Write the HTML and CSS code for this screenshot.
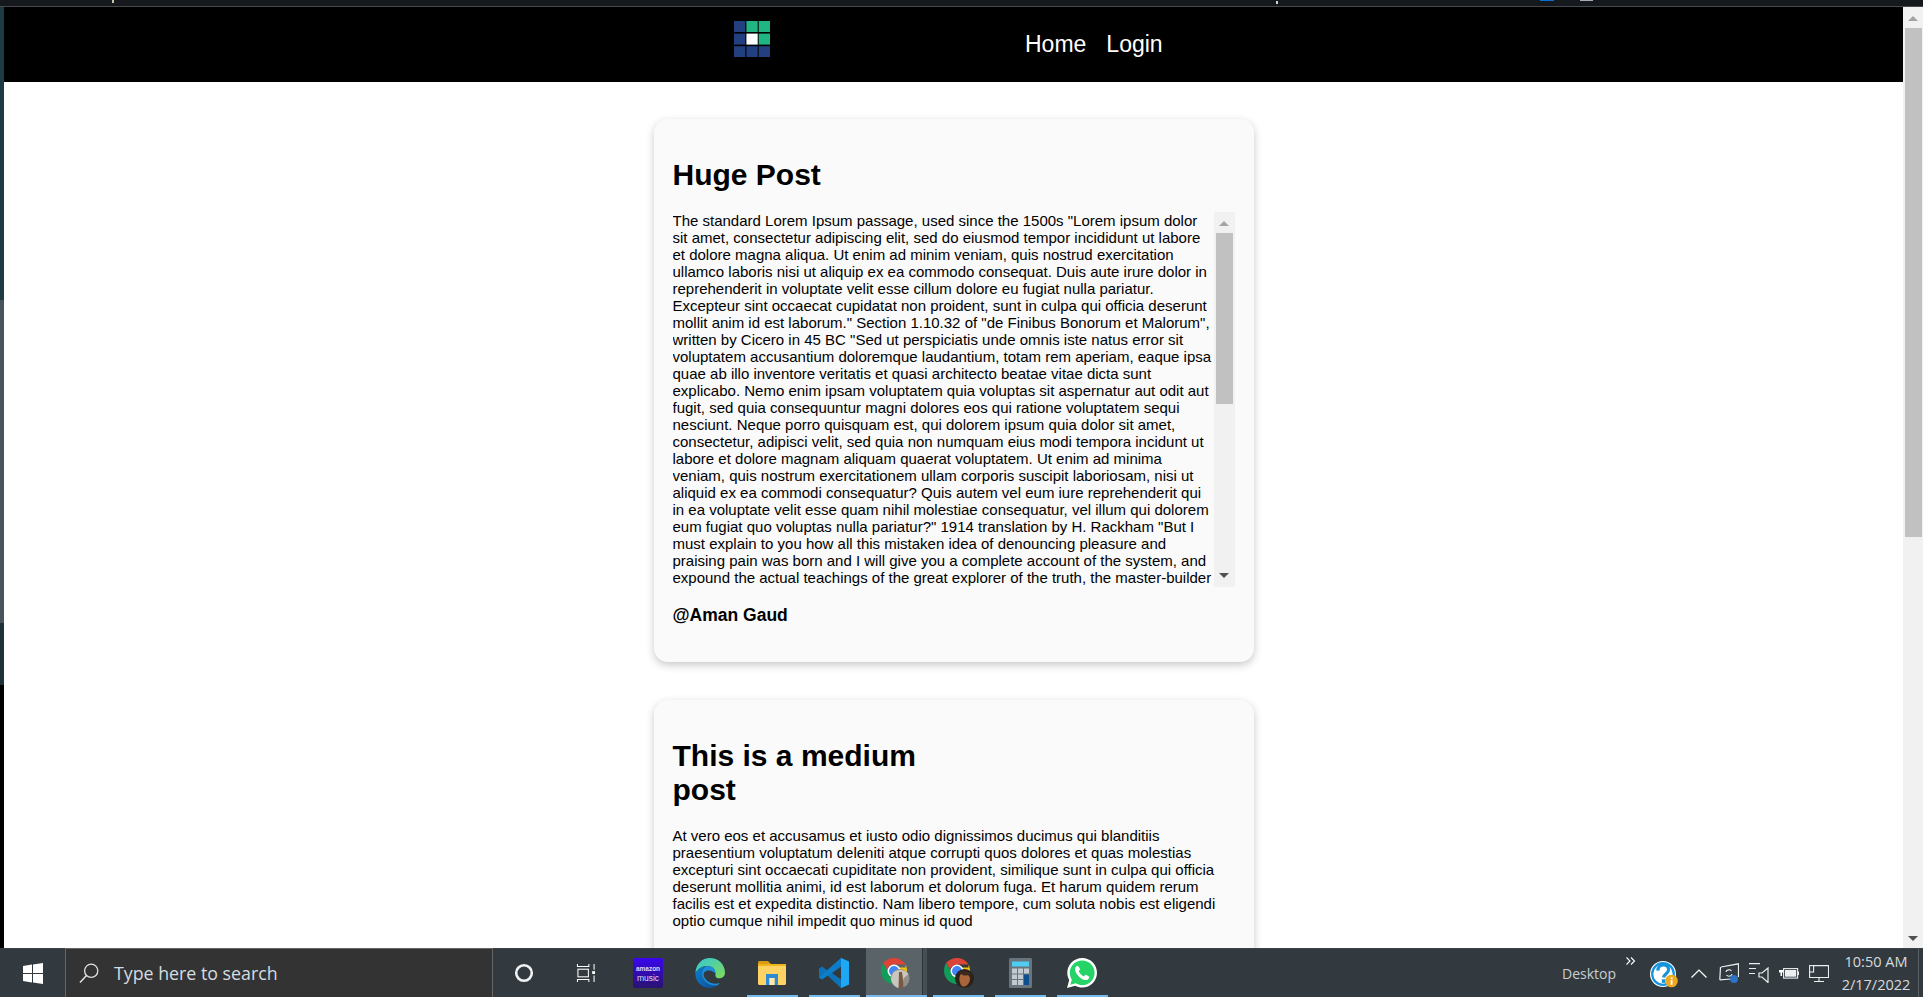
FILE: index.html
```html
<!DOCTYPE html>
<html lang="en">
<head>
<meta charset="utf-8">
<title>Posts</title>
<link rel="stylesheet" href="styles.css">
</head>
<body>
<div class="screen">
  <div class="topstrip">
    <span class="mark mark-a"></span>
    <span class="mark mark-b"></span>
    <span class="mark mark-c"></span>
    <span class="mark mark-d"></span>
  </div>
  <div class="window">
    <div class="desk-edge">
      <div class="edge-a"></div>
      <div class="edge-b"></div>
      <div class="edge-c"></div>
      <div class="edge-d"></div>
    </div>
    <div class="page">
      <nav class="navbar">
        <svg class="logo" viewBox="0 0 36 36">
          <rect x="0" y="0" width="11.3" height="11" fill="#22407f"/>
          <rect x="12.4" y="0" width="11.3" height="11" fill="#20b582"/>
          <rect x="24.7" y="0" width="11.3" height="11" fill="#20b582"/>
          <rect x="0" y="12.6" width="11.3" height="11" fill="#22407f"/>
          <rect x="12.4" y="12.6" width="11.3" height="11" fill="#fff"/>
          <rect x="24.7" y="12.6" width="11.3" height="11" fill="#20b582"/>
          <rect x="0" y="25.2" width="11.3" height="11" fill="#22407f"/>
          <rect x="12.4" y="25.2" width="11.3" height="11" fill="#22407f"/>
          <rect x="24.7" y="25.2" width="11.3" height="11" fill="#22407f"/>
        </svg>
        <div class="nav-links">
          <a class="nav-link">Home</a>
          <a class="nav-link">Login</a>
        </div>
      </nav>
      <main class="feed">
        <article class="card">
          <h2 class="card-title">Huge Post</h2>
          <div class="scroller">
            <p class="scroller-text">The standard Lorem Ipsum passage, used since the 1500s "Lorem ipsum dolor sit amet, consectetur adipiscing elit, sed do eiusmod tempor incididunt ut labore et dolore magna aliqua. Ut enim ad minim veniam, quis nostrud exercitation ullamco laboris nisi ut aliquip ex ea commodo consequat. Duis aute irure dolor in reprehenderit in voluptate velit esse cillum dolore eu fugiat nulla pariatur. Excepteur sint occaecat cupidatat non proident, sunt in culpa qui officia deserunt mollit anim id est laborum." Section 1.10.32 of "de Finibus Bonorum et Malorum", written by Cicero in 45 BC "Sed ut perspiciatis unde omnis iste natus error sit voluptatem accusantium doloremque laudantium, totam rem aperiam, eaque ipsa quae ab illo inventore veritatis et quasi architecto beatae vitae dicta sunt explicabo. Nemo enim ipsam voluptatem quia voluptas sit aspernatur aut odit aut fugit, sed quia consequuntur magni dolores eos qui ratione voluptatem sequi nesciunt. Neque porro quisquam est, qui dolorem ipsum quia dolor sit amet, consectetur, adipisci velit, sed quia non numquam eius modi tempora incidunt ut labore et dolore magnam aliquam quaerat voluptatem. Ut enim ad minima veniam, quis nostrum exercitationem ullam corporis suscipit laboriosam, nisi ut aliquid ex ea commodi consequatur? Quis autem vel eum iure reprehenderit qui in ea voluptate velit esse quam nihil molestiae consequatur, vel illum qui dolorem eum fugiat quo voluptas nulla pariatur?" 1914 translation by H. Rackham "But I must explain to you how all this mistaken idea of denouncing pleasure and praising pain was born and I will give you a complete account of the system, and expound the actual teachings of the great explorer of the truth, the master-builder</p>
            <div class="mini-bar">
              <div class="arrow-up small"></div>
              <div class="mini-track"><div class="mini-thumb"></div></div>
              <div class="arrow-down small"></div>
            </div>
          </div>
          <p class="author">@Aman Gaud</p>
        </article>
        <article class="card">
          <h2 class="card-title narrow">This is a medium post</h2>
          <p class="card-text">At vero eos et accusamus et iusto odio dignissimos ducimus qui blanditiis praesentium voluptatum deleniti atque corrupti quos dolores et quas molestias excepturi sint occaecati cupiditate non provident, similique sunt in culpa qui officia deserunt mollitia animi, id est laborum et dolorum fuga. Et harum quidem rerum facilis est et expedita distinctio. Nam libero tempore, cum soluta nobis est eligendi optio cumque nihil impedit quo minus id quod</p>
        </article>
      </main>
    </div>
    <div class="page-bar">
      <div class="arrow-up"></div>
      <div class="page-track"><div class="page-thumb"></div></div>
      <div class="arrow-down"></div>
    </div>
  </div>
  <footer class="taskbar">
    <div class="start">
      <svg class="win-logo" viewBox="0 0 20 21"><path fill="#fff" d="M0 3 9 1.6V10H0ZM10 1.4 20 0V10H10ZM0 11H9V19.4L0 18ZM10 11H20V21L10 19.6Z"/></svg>
    </div>
    <div class="search">
      <svg class="search-icon" viewBox="0 0 20 20"><circle cx="12.2" cy="7.8" r="6.6" fill="none" stroke="#dfe3e5" stroke-width="1.3"/><path d="M7.5 12.5 1 19.4" stroke="#dfe3e5" stroke-width="1.5" fill="none"/></svg>
      <span class="search-text">Type here to search</span>
    </div>
    <div class="tile">
      <svg class="cortana" viewBox="0 0 20 20"><circle cx="10" cy="10" r="7.8" fill="none" stroke="#f0f2f3" stroke-width="2.6"/></svg>
    </div>
    <div class="tile">
      <svg class="taskview" viewBox="0 0 20 20" fill="none" stroke="#fff" stroke-width="1.1"><path d="M1 0V2.6H13V0M1 19V16.4H13V19"/><rect x="1.5" y="5.5" width="11" height="8"/><path d="M18.5 0V6M18.5 12V19"/><rect x="16.5" y="7.5" width="3" height="3" fill="#fff" stroke="none"/></svg>
    </div>
    <div class="tile">
      <div class="amazon"><span class="amazon-top">amazon</span><span class="amazon-bottom">music</span></div>
    </div>
    <div class="tile">
      <svg class="app-icon" viewBox="0 0 30 30">
        <defs>
          <linearGradient id="edgeA" x1="0" y1="0" x2="1" y2="1"><stop offset="0" stop-color="#33c6d8"/><stop offset="1" stop-color="#7fdc58"/></linearGradient>
          <linearGradient id="edgeB" x1="0" y1="0" x2="1" y2="1"><stop offset="0" stop-color="#0c7fd0"/><stop offset="1" stop-color="#0b4f96"/></linearGradient>
        </defs>
        <path fill="url(#edgeA)" d="M15 0C23 0 30 6 30 14.5 30 20 25 21 22 20 20 19 20.500 17 20.500 15.500 20.500 11 17 8 12 8 7 8 3 11 .4 15 1 6 7 0 15 0Z"/>
        <path fill="url(#edgeB)" d="M.4 15C3 11 7 8 12 8 9 9 7 12 7 16 7 23 14 28 22 27.500 19.500 29.300 17 30 15 30 6 30 0 23 .4 15Z"/>
        <path fill="#1c8ddc" d="M12 8C17 8 20.500 11 20.500 15.500 17 12 12 11.500 9.500 14 8 15.700 8.500 20 12.500 23 16 25.500 20 26.500 25 25 24 26 23 27 22 27.500 14 28 7 23 7 16 7 12 9 9 12 8Z"/>
      </svg>
    </div>
    <div class="tile open">
      <svg class="folder" viewBox="0 0 28 24">
        <path fill="#d99c10" d="M0 1.500C0 .7.700 0 1.500 0H10L13 3H0Z"/>
        <rect y="3" width="28" height="4" fill="#eeb31d"/>
        <path fill="#ffd363" d="M0 5H28V22.500C28 23.300 27.300 24 26.500 24H1.500C.7 24 0 23.300 0 22.500Z"/>
        <path fill="#2d8ad4" d="M8 13H20V24H16.500V17H11.500V24H8Z"/>
        <rect x="11.500" y="17" width="5" height="7" fill="#ffe9ad"/>
      </svg>
    </div>
    <div class="tile open">
      <svg class="app-icon" viewBox="0 0 30 30">
        <path fill="#0e72b8" d="M22 0 30 3.500V26.500L22 30 8.500 17.500 3 21.500 0 19.500V10.500L3 8.500 8.500 12.500ZM22 8.500 13 15 22 21.500Z"/>
        <path fill="#1ea7f2" d="M22 0 30 3.500V26.500L22 30Z"/>
        <path fill="#0c7ec8" d="M0 19.500 22 0V8.500L3 21.500Z"/>
      </svg>
    </div>
    <div class="tile active">
      <svg class="app-icon" viewBox="0 0 30 30">
        <path fill="#db4437" d="M13 0C18 0 22 2.500 24.500 6.500H13C9.500 6.500 6.800 8.500 6 11.500L2 5C4.500 2 8.500 0 13 0Z"/>
        <path fill="#f4c20d" d="M24.500 6.500C25.500 8.500 26 10.700 26 13 26 20 20 26 13 26L18.500 16.500C19 15 19.300 12 17 9.500H24.500Z"/>
        <path fill="#0f9d58" d="M2 5 8 15.500C9.500 18.200 12.500 19.500 15 19L13 26C6 26 0 20 0 13 0 10 .7 7.200 2 5Z"/>
        <circle cx="13" cy="13" r="6.500" fill="#fff"/><circle cx="13" cy="13" r="5" fill="#4285f4"/>
        <circle cx="19" cy="20.500" r="9.500" fill="#8f8e8a"/>
        <path fill="#c9c6be" d="M12 15C15 11 24 11 27.500 16L23 20 20 30H17C13 28 10 24 10 20Z"/>
        <path fill="#7b5a44" d="M18 14 21 14 22 21 22.500 30H17.500Z"/>
      </svg>
    </div>
    <div class="tile open">
      <svg class="app-icon shifted" viewBox="0 0 30 30">
        <path fill="#db4437" d="M13 0C18 0 22 2.500 24.500 6.500H13C9.500 6.500 6.800 8.500 6 11.500L2 5C4.500 2 8.500 0 13 0Z"/>
        <path fill="#f4c20d" d="M24.500 6.500C25.500 8.500 26 10.700 26 13 26 20 20 26 13 26L18.500 16.500C19 15 19.300 12 17 9.500H24.500Z"/>
        <path fill="#0f9d58" d="M2 5 8 15.500C9.500 18.200 12.500 19.500 15 19L13 26C6 26 0 20 0 13 0 10 .7 7.200 2 5Z"/>
        <circle cx="13" cy="13" r="6.500" fill="#fff"/><circle cx="13" cy="13" r="5" fill="#4285f4"/>
        <circle cx="20.500" cy="20.500" r="9.500" fill="#2d211b"/>
        <path fill="#a8653a" d="M17 16C21 14 26 17 26 21 25.500 26 22 29 18.500 28.500 15.500 26.500 14 19 17 16Z"/>
        <path fill="#3a2a20" d="M15 15C19 12 25 13 28 17L20 17.500Z"/>
      </svg>
    </div>
    <div class="tile open">
      <svg class="calc" viewBox="0 0 23 30">
        <rect width="23" height="30" rx="1.500" fill="#68757f"/>
        <rect x="3" y="3.500" width="17" height="5" fill="#4fcdf0"/>
        <g fill="#c3cbd0">
          <rect x="3" y="10.500" width="5" height="5"/><rect x="9" y="10.500" width="5" height="5"/><rect x="15" y="10.500" width="5" height="5"/>
          <rect x="3" y="16.500" width="5" height="4.500"/><rect x="9" y="16.500" width="5" height="4.500"/>
          <rect x="3" y="22" width="5" height="5"/><rect x="9" y="22" width="5" height="5"/>
        </g>
        <rect x="15" y="16.500" width="5" height="10.500" fill="#104f8f"/>
      </svg>
    </div>
    <div class="tile open">
      <svg class="app-icon" viewBox="0 0 30 30">
        <path fill="#fff" d="M15.200 0C23.500 0 30 6.500 30 14.700 30 23 23.500 29.500 15.200 29.500 12.700 29.500 10.300 28.900 8.200 27.700L0 30 2.200 22C.9 19.800.3 17.300.3 14.700.3 6.500 7 0 15.200 0Z"/>
        <path fill="#25d366" d="M15.200 2.400C22.100 2.400 27.600 7.900 27.600 14.700 27.600 21.600 22.100 27.100 15.200 27.100 12.900 27.100 10.700 26.400 8.800 25.300L3.400 26.800 4.800 21.500C3.500 19.600 2.800 17.200 2.800 14.700 2.800 7.900 8.400 2.400 15.200 2.400Z"/>
        <path fill="#fff" d="M11 8C10.500 7.800 10 7.800 9.500 8.200 8.500 9 7.800 10.200 8 11.800 8.500 15 11 18.500 14.500 20.800 17 22.400 19.700 22.500 21.200 21.200 22 20.500 22.400 19.500 22.300 18.800 21 17.800 19.800 17.100 18.500 16.600L16.900 18.500C14.500 17.500 12.700 15.500 11.700 13.300L13.200 11.600C12.800 10.300 12 9 11 8Z"/>
      </svg>
    </div>
    <div class="tray">
      <span class="tray-label">Desktop</span>
      <svg class="tray-more" viewBox="0 0 10 8" fill="none" stroke="#fff" stroke-width="1.100"><path d="M.5.500 4 4 .5 7.500M5 .500 8.500 4 5 7.500"/></svg>
      <svg class="tray-help" viewBox="0 0 28 27">
        <circle cx="13" cy="13" r="13" fill="#fff"/>
        <circle cx="13" cy="13" r="10.800" fill="#fff" stroke="#1593dc" stroke-width="2.200"/>
        <path d="M7.800 9.600C8 5.800 10.500 4 13.300 4 16.300 4 18.600 5.800 18.600 8.800 18.600 12.500 14 12.800 13.600 16.500" fill="none" stroke="#1593dc" stroke-width="3.200"/>
        <rect x="11.800" y="18.300" width="3.600" height="3.600" fill="#1593dc"/>
        <circle cx="21.500" cy="20" r="6.300" fill="#f0a81f"/>
        <rect x="20.700" y="19" width="1.800" height="4.800" fill="#fff"/><rect x="20.700" y="16.300" width="1.800" height="1.800" fill="#fff"/>
      </svg>
      <svg class="tray-caret" viewBox="0 0 16 9"><path d="M.5 8.500 8 1 15.500 8.500" fill="none" stroke="#fff" stroke-width="1.200"/></svg>
      <svg class="tray-sync" viewBox="0 0 20 20" fill="none" stroke="#eceff0" stroke-width="1.200">
        <path d="M2 4 19.500.8V14M.8 16.800 1.500 4M.8 16.800 12 16"/>
        <path d="M7 9C7.500 6.500 11 6 12.500 8M13 11C12.500 13.500 9 14 7.500 12"/>
        <circle cx="15" cy="16" r="4" fill="#2c73c6" stroke="none"/>
      </svg>
      <svg class="tray-speaker" viewBox="0 0 20 20" fill="none" stroke="#eceff0" stroke-width="1.200">
        <path d="M0 .600H11M0 5.500H7M0 10.500H6"/>
        <path d="M19 5V19.500L13 14H10V10H13Z"/>
      </svg>
      <svg class="tray-battery" viewBox="0 0 20 12">
        <path d="M1 0V3M3.500 0V3M0 3H4.500V5.500H3V9H1.500V5.500H0Z" fill="#fff"/>
        <rect x="4.600" y="1.600" width="14" height="9.500" fill="none" stroke="#eceff0" stroke-width="1.100"/>
        <rect x="6" y="3" width="11.200" height="6.700" fill="#eceff0"/>
        <rect x="19" y="4.500" width="1" height="3.500" fill="#eceff0"/>
      </svg>
      <svg class="tray-net" viewBox="0 0 20 17" fill="none" stroke="#eceff0" stroke-width="1.100">
        <path d="M5 .600H19.500V12.500H.6V7M10 12.500V16M5 16.500H15"/>
        <rect x=".6" y=".6" width="4" height="6.400"/>
      </svg>
      <div class="clock">
        <span class="clock-line">10:50 AM</span>
        <span class="clock-line">2/17/2022</span>
      </div>
      <div class="show-desktop"></div>
    </div>
  </footer>
</div>
</body>
</html>
```

FILE: styles.css
```css
* { box-sizing: border-box; }
html, body { margin: 0; height: 100%; overflow: hidden; }
body { font-family: "Liberation Sans", Arial, sans-serif; color: #000; background: #000; }

.screen { display: flex; flex-direction: column; height: 997px; width: 1923px; }
.topstrip { height: 7px; flex: none; background: #15181c; border-bottom: 1px solid #46484a; position: relative; }
.mark { position: absolute; top: 0; }
.mark-a { left: 112px; width: 2px; height: 3px; background: #c9c4a0; }
.mark-b { left: 1540px; width: 14px; height: 1px; background: #0a6fd0; }
.mark-c { left: 1580px; width: 13px; height: 1px; background: #a9a9bb; }
.mark-d { left: 1276px; top: 1px; width: 2px; height: 3px; background: #cfd2d4; }

.window { flex: 1; min-height: 0; display: flex; }
.desk-edge { width: 4px; flex: none; display: flex; flex-direction: column; }
.edge-a { height: 293px; background: #1f3a42; flex: none; }
.edge-b { height: 323px; background: #47545a; flex: none; }
.edge-c { height: 62px; background: #1e3038; flex: none; }
.edge-d { flex: 1; background: #000; }

.page { flex: 1; min-width: 0; background: #fff; overflow: hidden; }
.navbar { height: 75px; background: #000; display: flex; padding-left: 730px; }
.logo { width: 36px; height: 36px; margin-top: 14px; flex: none; }
.nav-links { display: flex; gap: 20px; margin-left: 255px; align-items: center; padding-bottom: 1px; }
.nav-link { color: #fff; font-size: 23px; }

.feed { display: flex; flex-direction: column; align-items: center; gap: 38px; padding-top: 37px; }
.card { width: 600px; flex: none; padding: 19px 19px 37px; background: #fafafa; border-radius: 14px; box-shadow: 0 3px 8px rgba(0,0,0,.22); }
.card-title { margin: 20px 0; font-size: 30px; font-weight: 700; line-height: 34px; }
.card-title.narrow { max-width: 280px; }
.scroller { display: flex; height: 375px; overflow: hidden; }
.scroller-text { flex: 1; margin: 0; font-size: 15px; line-height: 17px; min-width: 0; }
.card-text { margin: 0; font-size: 15px; line-height: 17px; padding-bottom: 60px; }
.author { margin: 18px 0 0; font-size: 17.5px; font-weight: 700; line-height: 20px; }

.mini-bar { width: 21px; flex: none; background: #f1f1f1; display: flex; flex-direction: column; align-items: center; }
.mini-track { flex: 1; width: 100%; padding: 0 2px; }
.mini-thumb { height: 171px; background: #c1c1c1; margin-top: 4px; }

.page-bar { width: 20px; flex: none; background: #f1f1f1; display: flex; flex-direction: column; align-items: center; }
.page-track { flex: 1; width: 100%; padding: 0 1px 0 2px; }
.page-thumb { height: 509px; background: #c1c1c1; margin-top: 1px; }

.arrow-up, .arrow-down { flex: none; width: 0; height: 0; border-left: 5px solid transparent; border-right: 5px solid transparent; }
.arrow-up { border-bottom: 5px solid #a3a3a3; margin-top: 9px; margin-bottom: 6px; }
.arrow-down { border-top: 5px solid #505050; margin-top: 6px; margin-bottom: 7px; }
.arrow-up.small { margin-top: 9px; margin-bottom: 3px; }
.arrow-down.small { margin-top: 3px; margin-bottom: 9px; }

.taskbar { height: 49px; flex: none; display: flex; background: #323a3f; border-top: 1px solid #3c4347; color: #fff; position: relative; }
.start { width: 65px; flex: none; display: flex; align-items: center; justify-content: center; }
.win-logo { width: 20px; height: 21px; }
.search { width: 428px; flex: none; display: flex; align-items: center; background: #333; border: 1px solid #666; border-bottom: 0; margin-top: -1px; padding-left: 13px; gap: 15px; }
.search-icon { width: 20px; height: 20px; flex: none; }
.search-text { font-family: "Open Sans", sans-serif; font-size: 17.8px; color: #d4dde2; white-space: nowrap; }

.tile { width: 62px; flex: none; display: flex; align-items: center; justify-content: center; position: relative; }
.tile.open::after, .tile.active::after { content: ""; position: absolute; bottom: 0; height: 2px; background: #76b9ed; left: 6px; right: 5px; }
.tile.active { width: 61px; margin: -1px 0 0 1px; background: linear-gradient(to right, #5a6468 0, #5a6468 56px, #2c3236 56px, #2c3236 57px, #454e52 57px); justify-content: flex-start; padding-left: 15px; }
.tile.active::after { left: 0; right: 0; }
.cortana { width: 20px; height: 20px; }
.taskview { width: 20px; height: 19px; }
.app-icon { width: 30px; height: 30px; }
.app-icon.shifted { margin-left: 2px; }
.folder { width: 28px; height: 24px; }
.calc { width: 23px; height: 30px; }
.amazon { width: 30px; height: 30px; border-radius: 2px; background: linear-gradient(#3a06f0, #2a1270); display: flex; flex-direction: column; align-items: center; justify-content: center; color: #dcd8f6; }
.amazon-top { font-size: 6.5px; line-height: 9px; font-weight: 700; }
.amazon-bottom { font-size: 8.5px; line-height: 10px; }

.tray { margin-left: auto; display: flex; align-items: center; position: relative; flex: none; }
.tray-label { font-family: "Open Sans", sans-serif; font-size: 14px; color: #c9ced1; margin-right: 10px; }
.tray-more { width: 10px; height: 8px; margin: -25px 14px 0 0; }
.tray-help { width: 28px; height: 27px; margin: 2px 13px 0 0; }
.tray-caret { width: 16px; height: 9px; margin-right: 12px; }
.tray-sync { width: 20px; height: 20px; margin-right: 10px; }
.tray-speaker { width: 20px; height: 20px; margin-right: 10px; }
.tray-battery { width: 20px; height: 12px; margin-right: 10px; }
.tray-net { width: 20px; height: 17px; margin-right: 12px; }
.clock { display: flex; flex-direction: column; align-items: center; width: 70px; font-family: "Open Sans", sans-serif; font-size: 14.5px; color: #d8dbdd; line-height: 23px; }
.clock-line { white-space: nowrap; }
.show-desktop { width: 5px; height: 100%; margin-left: 7px; border-left: 1px solid #5a6266; }
```
